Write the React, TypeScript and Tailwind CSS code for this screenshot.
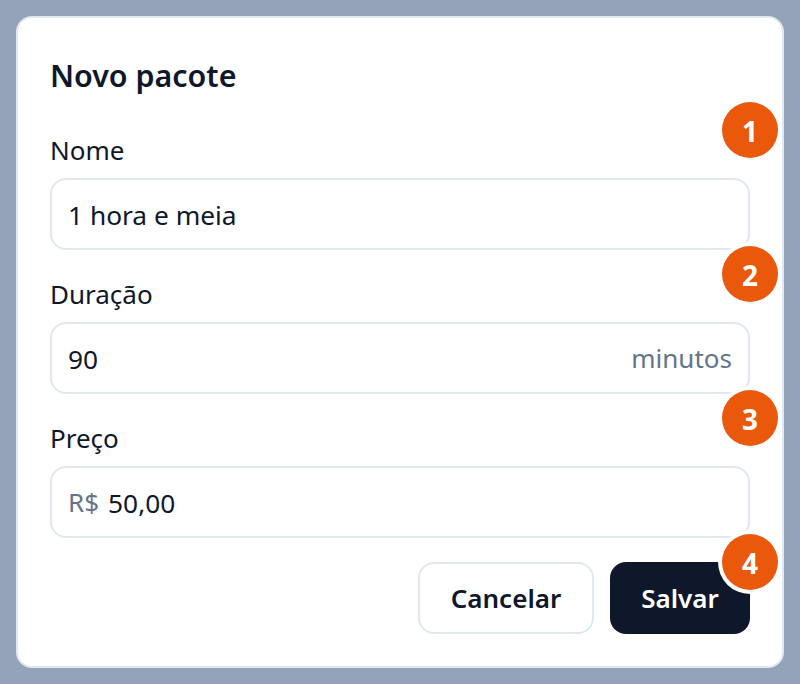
import React from "react";

const Badge = ({ n }: { n: number }) => (
    <span className="absolute -top-7 -right-7 z-10 flex h-14 w-14 items-center justify-center rounded-full bg-[#ea580c] pt-0.5 text-[28px] font-bold text-white shadow-[0_0_0_4px_#ffffff]">
        {n}
    </span>
);

const fields = [
    { label: "Nome", value: "1 hora e meia" },
    { label: "Duração", value: "90", suffix: "minutos" },
    { label: "Preço", value: "50,00", prefix: "R$" },
];

export default function App() {
    return (
        <div className="min-h-[684px] bg-[#94a3b8] p-4 font-['Noto_Sans','Open_Sans',sans-serif] text-[#0f172a]">
            <div className="flex flex-col gap-6 rounded-2xl border-2 border-[#e2e8f0] bg-white p-8">
                <h1 className="pb-1 text-[30.4px] leading-[52px] font-semibold">Novo pacote</h1>

                {fields.map((field, i) => (
                    <div key={field.label} className="relative flex flex-col gap-2">
                        <Badge n={i + 1} />
                        <label className="text-[26px] leading-10">{field.label}</label>
                        <div className="flex h-[72px] items-center gap-[9px] rounded-2xl border-2 border-[#e2e8f0] px-4 text-[26px]">
                            {field.prefix && <span className="text-[#64748b]">{field.prefix}</span>}
                            <span className="flex-1 pt-1 text-[26.3px]">{field.value}</span>
                            {field.suffix && <span className="text-[#64748b]">{field.suffix}</span>}
                        </div>
                    </div>
                ))}

                <div className="flex justify-end gap-4">
                    <button className="h-[72px] w-[176px] rounded-2xl border-2 border-[#e2e8f0] text-[26px] font-semibold">
                        Cancelar
                    </button>
                    <div className="relative">
                        <Badge n={4} />
                        <button className="h-[72px] w-[140px] rounded-2xl bg-[#0f172a] text-[26px] font-semibold text-white">
                            Salvar
                        </button>
                    </div>
                </div>
            </div>
        </div>
    );
}
